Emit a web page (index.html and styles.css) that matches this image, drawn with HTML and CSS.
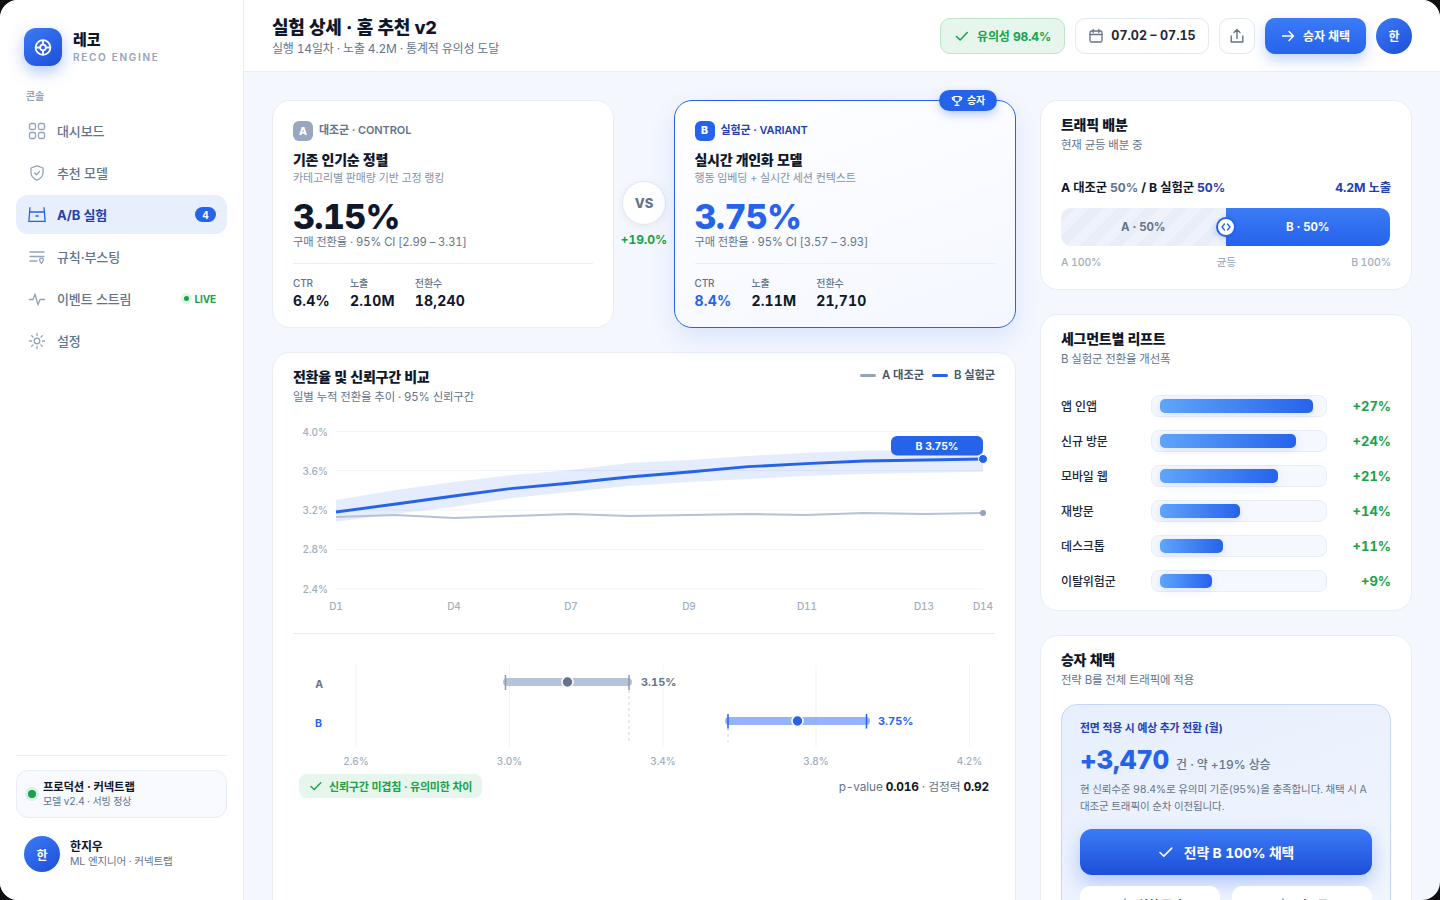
FILE: index.html
```html
<!DOCTYPE html>
<html lang="ko">
<head>
  <meta charset="UTF-8" />
  <title>레코 - 실험 상세</title>
  <link rel="stylesheet" href="styles.css">
</head>
<body>
  <div class="app">
    <aside class="sidebar">
      <div class="brand">
        <div class="brand-logo">
          <svg width="20" height="20" viewBox="0 0 20 20" fill="none" stroke="#fff" stroke-width="1.8">
            <circle cx="10" cy="10.500" r="7.400"/>
            <circle cx="10" cy="10.500" r="2.800"/>
            <path d="M10 3v4.700M10 13.300V18M2.600 10.500h4.600M12.800 10.500h4.600"/>
          </svg>
        </div>
        <div>
          <div class="brand-name">레코</div>
          <div class="brand-sub">RECO ENGINE</div>
        </div>
      </div>

      <div class="nav-title">콘솔</div>
      <nav class="nav">
        <a class="nav-item">
          <svg class="nav-icon" viewBox="0 0 18 18" fill="none" stroke="currentColor" stroke-width="1.3"><rect x="1.500" y="1.500" width="6" height="6" rx="1.500"/><rect x="10.500" y="1.500" width="6" height="6" rx="1.500"/><rect x="1.500" y="10.500" width="6" height="6" rx="1.500"/><rect x="10.500" y="10.500" width="6" height="6" rx="1.500"/></svg>
          대시보드
        </a>
        <a class="nav-item">
          <svg class="nav-icon" viewBox="0 0 18 18" fill="none" stroke="currentColor" stroke-width="1.3" stroke-linejoin="round" stroke-linecap="round"><path d="M9 1.800l6 2.200v4.600c0 3.600-2.500 6.200-6 7.600-3.500-1.400-6-4-6-7.600V4z"/><path d="M6.600 9l1.700 1.700 3.200-3.200"/></svg>
          추천 모델
        </a>
        <a class="nav-item active">
          <svg class="nav-icon" viewBox="0 0 18 18" fill="none" stroke="currentColor" stroke-width="1.300"><path d="M2 1.300L.9 15.300h16.200L16 1.300"/><path d="M1.600 6h14.800"/><path d="M7.300 10h3.400"/></svg>
          A/B 실험
          <span class="nav-badge">4</span>
        </a>
        <a class="nav-item">
          <svg class="nav-icon" viewBox="0 0 18 18" fill="none" stroke="currentColor" stroke-width="1.3" stroke-linecap="round"><path d="M2 4h14M2 8.500h14M2 13h7"/><path d="M13.500 10.200a1.900 1.900 0 0 1 1.900 1.900c0 1-1 1.900-1.900 3.200-.9-1.300-1.900-2.200-1.900-3.200a1.900 1.900 0 0 1 1.900-1.900z"/></svg>
          규칙·부스팅
        </a>
        <a class="nav-item">
          <svg class="nav-icon" viewBox="0 0 18 18" fill="none" stroke="currentColor" stroke-width="1.3" stroke-linecap="round" stroke-linejoin="round"><path d="M1.500 9.500h3.500L7 4l3 11 2-5.500h4.500"/></svg>
          이벤트 스트림
          <span class="nav-live"><i class="live-dot"></i>LIVE</span>
        </a>
        <a class="nav-item">
          <svg class="nav-icon" viewBox="0 0 18 18" fill="none" stroke="currentColor" stroke-width="1.3" stroke-linecap="round"><circle cx="9" cy="9" r="2.800"/><path d="M9 1.500v2M9 14.500v2M1.500 9h2M14.500 9h2M3.700 3.700l1.400 1.400M12.900 12.900l1.400 1.400M3.700 14.300l1.400-1.400M12.900 5.100l1.400-1.400"/></svg>
          설정
        </a>
      </nav>

      <div class="side-foot">
        <div class="env-card">
          <i class="env-dot"></i>
          <div>
            <div class="env-name">프로덕션 · 커넥트랩</div>
            <div class="env-sub">모델 v2.4 · 서빙 정상</div>
          </div>
        </div>
        <div class="user">
          <div class="avatar">한</div>
          <div>
            <div class="user-name">한지우</div>
            <div class="user-role">ML 엔지니어 · 커넥트랩</div>
          </div>
        </div>
      </div>
    </aside>

    <div class="page">
      <header class="topbar">
        <div class="top-text">
          <h1>실험 상세 · 홈 추천 v2</h1>
          <p>실행 14일차 · 노출 4.2M · 통계적 유의성 도달</p>
        </div>
        <div class="top-actions">
          <div class="pill pill-green">
            <svg width="16" height="16" viewBox="0 0 16 16" fill="none" stroke="currentColor" stroke-width="1.500" stroke-linecap="round" stroke-linejoin="round"><path d="M2.500 8.500l3.600 3.400 7.200-7.400"/></svg>
            유의성 98.4%
          </div>
          <div class="pill pill-date">
            <svg width="16" height="16" viewBox="0 0 16 16" fill="none" stroke="#64748b" stroke-width="1.3" stroke-linecap="round"><rect x="2" y="3" width="12" height="11" rx="1.600"/><path d="M2 6.500h12M5.200 1.500v3M10.800 1.500v3"/></svg>
            07.02 – 07.15
          </div>
          <div class="icon-btn">
            <svg width="16" height="16" viewBox="0 0 16 16" fill="none" stroke="#64748b" stroke-width="1.4" stroke-linecap="round" stroke-linejoin="round"><path d="M8 10.500V1.800M5 4.500l3-3 3 3"/><path d="M2.200 8v6h11.600V8"/></svg>
          </div>
          <div class="cta">
            <svg width="14" height="14" viewBox="0 0 14 14" fill="none" stroke="#fff" stroke-width="1.4" stroke-linecap="round" stroke-linejoin="round"><path d="M1.500 7h11M8 2.500L12.500 7 8 11.500"/></svg>
            승자 채택
          </div>
          <div class="avatar">한</div>
        </div>
      </header>

      <main class="content">
        <div class="col-left">
          <section class="compare">
            <article class="variant">
              <div class="variant-tag"><span class="letter letter-a">A</span><span class="tag-text">대조군 · CONTROL</span></div>
              <h2>기존 인기순 정렬</h2>
              <p class="variant-desc">카테고리별 판매량 기반 고정 랭킹</p>
              <div class="rate">3.15%</div>
              <p class="rate-sub">구매 전환율 · 95% CI [2.99 – 3.31]</p>
              <div class="stats">
                <div><span>CTR</span><b>6.4%</b></div>
                <div><span>노출</span><b>2.10M</b></div>
                <div><span>전환수</span><b>18,240</b></div>
              </div>
            </article>

            <div class="versus">
              <div class="vs-circle">VS</div>
              <div class="vs-lift">+19.0%</div>
            </div>

            <article class="variant variant-b">
              <div class="ribbon">
                <svg width="12" height="12" viewBox="0 0 12 12" fill="none" stroke="#fff" stroke-width="1.2" stroke-linecap="round"><path d="M3 1.500h6v2.500a3 3 0 0 1-6 0z"/><path d="M3 2.500H1.200c0 1.600.6 2.400 1.900 2.600M9 2.500h1.800c0 1.600-.6 2.400-1.900 2.600M6 7v2.600M4 10.300h4"/></svg>
                <span class="ribbon-text">승자</span>
              </div>
              <div class="variant-tag"><span class="letter letter-b">B</span><span class="tag-text">실험군 · VARIANT</span></div>
              <h2>실시간 개인화 모델</h2>
              <p class="variant-desc">행동 임베딩 + 실시간 세션 컨텍스트</p>
              <div class="rate">3.75%</div>
              <p class="rate-sub">구매 전환율 · 95% CI [3.57 – 3.93]</p>
              <div class="stats">
                <div><span>CTR</span><b class="blue">8.4%</b></div>
                <div><span>노출</span><b>2.11M</b></div>
                <div><span>전환수</span><b>21,710</b></div>
              </div>
            </article>
          </section>

          <section class="card chart-card">
            <div class="chart-head">
              <div class="card-head">
                <h3>전환율 및 신뢰구간 비교</h3>
                <p>일별 누적 전환율 추이 · 95% 신뢰구간</p>
              </div>
              <div class="legend">
                <span><i class="swatch swatch-a"></i>A 대조군</span>
                <span><i class="swatch swatch-b"></i>B 실험군</span>
              </div>
            </div>

            <svg class="line-chart" width="702" height="200" viewBox="293 420 702 200">
              <g stroke="#eff3fb" stroke-width="1.2">
                <path d="M336 431.500H983M336 470.500H983M336 510H983M336 549.500H983M336 589H983"/>
              </g>
              <g class="axis" text-anchor="end">
                <text x="328" y="436">4.0%</text>
                <text x="328" y="475">3.6%</text>
                <text x="328" y="514">3.2%</text>
                <text x="328" y="553">2.8%</text>
                <text x="328" y="593">2.4%</text>
              </g>
              <g class="axis" text-anchor="middle">
                <text x="336" y="610">D1</text>
                <text x="454" y="610">D4</text>
                <text x="571" y="610">D7</text>
                <text x="689" y="610">D9</text>
                <text x="807" y="610">D11</text>
                <text x="924" y="610">D13</text>
                <text x="983" y="610">D14</text>
              </g>
              <path fill="#2563eb" fill-opacity=".12" d="M336 500L396 490L454 482L513 475L571 470L629 463L689 460L748 456L806 452.700L864 450.700L925 450L983 450V471.700L925 472.700L864 474L806 476L748 479L689 482L629 486L571 491.700L513 498L454 506.700L396 513.700L336 521.700Z"/>
              <path fill="none" stroke="#b6c2d6" stroke-width="2" stroke-linejoin="round" d="M336 517L396 515L454 518L513 516L571 514L629 516L689 515L748 514L806 515L864 513L925 514L983 513"/>
              <path fill="none" stroke="#2563eb" stroke-width="2.800" stroke-linejoin="round" d="M336 512L396 504L454 496L513 488.300L571 483L629 477L689 472L748 466.700L806 463.700L864 461L925 460L983 459"/>
              <circle cx="983" cy="513" r="3" fill="#94a3b8"/>
              <circle cx="983" cy="459" r="4.500" fill="#2563eb" stroke="#fff" stroke-width="1"/>
              <rect x="891" y="436" width="92" height="19.500" rx="6" fill="#2563eb"/>
              <text class="chart-tag" x="937" y="449.500" text-anchor="middle">B 3.75%</text>
            </svg>

            <div class="forest">
              <svg width="702" height="120" viewBox="293 650 702 120">
                <path stroke="#eff3fb" stroke-width="1" d="M356 665V747M509.500 665V747M663 665V747M816 665V747M969.500 665V747"/>
                <path stroke="#cbd5e1" stroke-width="1" stroke-dasharray="3 3" d="M629 690V742M728 728V742"/>
                <text class="row-label row-a" x="319" y="688" text-anchor="middle">A</text>
                <text class="row-label row-b" x="318.500" y="727" text-anchor="middle">B</text>

                <path stroke="#b6c3d9" stroke-width="8" stroke-linecap="round" d="M507 682H628"/>
                <path stroke="#8a9ab3" stroke-width="1.500" d="M505.500 675V690M629 675V690"/>
                <circle cx="567.500" cy="682" r="5.500" fill="#64748b" stroke="#fff" stroke-width="1.500"/>
                <text class="ci-val ci-a" x="641" y="686">3.15%</text>

                <path stroke="#93b4fb" stroke-width="8" stroke-linecap="round" d="M729 721H866"/>
                <path stroke="#2563eb" stroke-width="1.500" d="M728 714V728.500M866.500 714V728.500"/>
                <circle cx="797.500" cy="721" r="5.500" fill="#2563eb" stroke="#fff" stroke-width="1.500"/>
                <text class="ci-val ci-b" x="878" y="725">3.75%</text>

                <g class="axis" text-anchor="middle">
                  <text x="356" y="765">2.6%</text>
                  <text x="509.500" y="765">3.0%</text>
                  <text x="663" y="765">3.4%</text>
                  <text x="816" y="765">3.8%</text>
                  <text x="969.500" y="765">4.2%</text>
                </g>
              </svg>
              <div class="forest-foot">
                <div class="sig-badge">
                  <svg width="14" height="14" viewBox="0 0 14 14" fill="none" stroke="currentColor" stroke-width="1.400" stroke-linecap="round" stroke-linejoin="round"><path d="M2 7.500l3.200 3 6.600-6.800"/></svg>
                  신뢰구간 미겹침 · 유의미한 차이
                </div>
                <div class="pvalue">p-value <b>0.016</b> · 검정력 <b>0.92</b></div>
              </div>
            </div>
          </section>
        </div>

        <div class="col-right">
          <section class="card">
            <div class="card-head">
              <h3>트래픽 배분</h3>
              <p>현재 균등 배분 중</p>
            </div>
            <div class="split-row">
              <span>A 대조군 <em class="grey">50%</em> / B 실험군 <em class="navy">50%</em></span>
              <span class="navy">4.2M 노출</span>
            </div>
            <div class="split-bar">
              <div class="split-a">A · 50%</div>
              <div class="split-b">B · 50%</div>
              <div class="split-handle">
                <svg width="10" height="10" viewBox="0 0 10 10" fill="none" stroke="#2563eb" stroke-width="1.300" stroke-linecap="round" stroke-linejoin="round"><path d="M3.500 2L1 5l2.500 3M6.500 2L9 5 6.500 8"/></svg>
              </div>
            </div>
            <div class="split-scale"><span>A 100%</span><span>균등</span><span>B 100%</span></div>
          </section>

          <section class="card">
            <div class="card-head">
              <h3>세그먼트별 리프트</h3>
              <p>B 실험군 전환율 개선폭</p>
            </div>
            <div class="segments">
              <div class="segment"><span class="seg-name">앱 인앱</span><div class="seg-track"><div class="seg-fill" style="width:153px"></div></div><span class="seg-val">+27%</span></div>
              <div class="segment"><span class="seg-name">신규 방문</span><div class="seg-track"><div class="seg-fill" style="width:136px"></div></div><span class="seg-val">+24%</span></div>
              <div class="segment"><span class="seg-name">모바일 웹</span><div class="seg-track"><div class="seg-fill" style="width:118px"></div></div><span class="seg-val">+21%</span></div>
              <div class="segment"><span class="seg-name">재방문</span><div class="seg-track"><div class="seg-fill" style="width:80px"></div></div><span class="seg-val">+14%</span></div>
              <div class="segment"><span class="seg-name">데스크톱</span><div class="seg-track"><div class="seg-fill" style="width:63px"></div></div><span class="seg-val">+11%</span></div>
              <div class="segment"><span class="seg-name">이탈위험군</span><div class="seg-track"><div class="seg-fill" style="width:52px"></div></div><span class="seg-val">+9%</span></div>
            </div>
          </section>

          <section class="card">
            <div class="card-head">
              <h3>승자 채택</h3>
              <p>전략 B를 전체 트래픽에 적용</p>
            </div>
            <div class="adopt">
              <div class="adopt-title">전면 적용 시 예상 추가 전환 (월)</div>
              <div class="adopt-num"><strong>+3,470</strong><span>건 · 약 +19% 상승</span></div>
              <p class="adopt-desc">현 신뢰수준 98.4%로 유의미 기준(95%)을 충족합니다. 채택 시 A 대조군 트래픽이 순차 이전됩니다.</p>
              <div class="adopt-btn">
                <svg width="16" height="16" viewBox="0 0 16 16" fill="none" stroke="#fff" stroke-width="1.500" stroke-linecap="round" stroke-linejoin="round"><path d="M2 8.500l3.800 3.600 8-8"/></svg>
                전략 B 100% 채택
              </div>
              <div class="adopt-sub">
                <div class="ghost-btn">
                  <svg width="14" height="14" viewBox="0 0 14 14" fill="none" stroke="#64748b" stroke-width="1.300"><path d="M7 1.500v5M3 4.500a5 5 0 1 0 8 0"/></svg>
                  실험 중단
                </div>
                <div class="ghost-btn">
                  <svg width="14" height="14" viewBox="0 0 14 14" fill="none" stroke="#64748b" stroke-width="1.300"><path d="M7 1.500v8M4 6.500l3 3 3-3M2 12.500h10"/></svg>
                  리포트
                </div>
              </div>
            </div>
          </section>
        </div>
      </main>
    </div>
  </div>
</body>
</html>
```

FILE: styles.css
```css
/* Reset */
*, *::before, *::after {
  box-sizing: border-box;
}

body {
  margin: 0;
  background: #0f0f12;
  font-family: Inter, "Noto Sans CJK KR", sans-serif;
  font-variant-numeric: tabular-nums;
  letter-spacing: -0.12px;
  color: #0f172a;
}

h1, h2, h3, p {
  margin: 0;
}

.app {
  width: 1440px;
  height: 900px;
  display: flex;
  overflow: hidden;
  border-radius: 18px;
  background: #f4f7fe;
}

/* Sidebar */
.sidebar {
  width: 244px;
  flex-shrink: 0;
  display: flex;
  flex-direction: column;
  background: #fff;
  border-right: 1px solid #e8edf7;
  padding: 28px 16px 28px;
}

.brand {
  display: flex;
  align-items: center;
  gap: 11px;
  padding-left: 8px;
}

.brand-logo {
  width: 38px;
  height: 38px;
  display: flex;
  align-items: center;
  justify-content: center;
  border-radius: 12px;
  background: linear-gradient(145deg, #3b7bf6, #1d4ed8);
  box-shadow: 0 6px 16px rgba(37, 99, 235, 0.35);
}

.brand-name {
  font-size: 15px;
  font-weight: 800;
  line-height: 20px;
}

.brand-sub {
  font-size: 10px;
  font-weight: 600;
  line-height: 14px;
  letter-spacing: 1.7px;
  color: #94a3b8;
}

.nav-title {
  margin-top: 22px;
  padding-left: 10px;
  font-size: 10px;
  font-weight: 600;
  line-height: 16px;
  color: #94a3b8;
}

.nav {
  margin-top: 7px;
  display: flex;
  flex-direction: column;
  gap: 3px;
}

.nav-item {
  height: 39px;
  display: flex;
  align-items: center;
  gap: 11px;
  padding: 0 11px 0 12px;
  border-radius: 12px;
  font-size: 13px;
  font-weight: 500;
  color: #64748b;
}

.nav-item.active {
  background: #e7eefc;
  color: #1e40af;
  font-weight: 700;
}

.nav-item.active .nav-icon {
  color: #2563eb;
}

.nav-icon {
  width: 18px;
  height: 18px;
  flex-shrink: 0;
  color: #94a3b8;
}

.nav-badge {
  margin-left: auto;
  min-width: 21px;
  height: 15px;
  display: flex;
  align-items: center;
  justify-content: center;
  border-radius: 8px;
  background: #2563eb;
  color: #fff;
  font-size: 10px;
  font-weight: 700;
}

.nav-live {
  margin-left: auto;
  display: flex;
  align-items: center;
  gap: 5px;
  font-size: 10px;
  font-weight: 700;
  color: #16a34a;
}

.live-dot {
  width: 5px;
  height: 5px;
  border-radius: 50%;
  background: #16a34a;
  box-shadow: 0 0 0 3px rgba(22, 163, 74, 0.13);
}

.side-foot {
  margin-top: auto;
  border-top: 1px solid #e8edf7;
  padding-top: 14px;
}

.env-card {
  height: 48px;
  display: flex;
  align-items: center;
  gap: 7px;
  padding: 0 10px 0 11px;
  border: 1px solid #e8edf7;
  border-radius: 12px;
  background: #f8faff;
}

.env-dot {
  width: 8px;
  height: 8px;
  flex-shrink: 0;
  border-radius: 50%;
  background: #16a34a;
  box-shadow: 0 0 0 3px rgba(22, 163, 74, 0.13);
}

.env-name {
  font-size: 11.3px;
  font-weight: 700;
  line-height: 15px;
}

.env-sub {
  font-size: 10px;
  line-height: 13px;
  color: #64748b;
}

.user {
  margin-top: 18px;
  display: flex;
  align-items: center;
  gap: 10px;
  padding-left: 8px;
}

.avatar {
  width: 36px;
  height: 36px;
  flex-shrink: 0;
  display: flex;
  align-items: center;
  justify-content: center;
  border-radius: 50%;
  background: linear-gradient(145deg, #3b7bf6, #1d4ed8);
  color: #fff;
  font-size: 12px;
  font-weight: 700;
}

.user-name {
  font-size: 12px;
  font-weight: 600;
  line-height: 16px;
}

.user-role {
  font-size: 10.5px;
  line-height: 14px;
  color: #64748b;
}

/* Topbar */
.page {
  flex: 1;
  min-width: 0;
  display: flex;
  flex-direction: column;
}

.topbar {
  height: 72px;
  flex-shrink: 0;
  display: flex;
  align-items: center;
  justify-content: space-between;
  padding: 0 28px;
  background: #fff;
  border-bottom: 1px solid #e8edf7;
}

.top-text h1 {
  font-size: 18px;
  font-weight: 800;
  line-height: 25px;
  letter-spacing: -0.3px;
}

.top-text p {
  font-size: 12px;
  line-height: 17px;
  letter-spacing: -0.18px;
  color: #64748b;
}

.top-actions {
  display: flex;
  align-items: center;
  gap: 10px;
}

.pill {
  height: 36px;
  display: flex;
  align-items: center;
  gap: 6px;
  border-radius: 10px;
  font-size: 12px;
  font-weight: 700;
}

.pill-green {
  width: 125px;
  justify-content: center;
  gap: 7px;
  background: #e7f6ec;
  border: 1px solid #bbe6c9;
  color: #16a34a;
}

.pill-date {
  width: 134px;
  justify-content: center;
  gap: 7px;
  background: #fff;
  border: 1px solid #e2e8f4;
  font-size: 12.5px;
  letter-spacing: 0;
  color: #1e293b;
}

.icon-btn {
  width: 36px;
  height: 36px;
  display: flex;
  align-items: center;
  justify-content: center;
  border: 1px solid #e2e8f4;
  border-radius: 10px;
  background: #fff;
}

.cta {
  width: 101px;
  height: 36px;
  display: flex;
  align-items: center;
  justify-content: center;
  gap: 8px;
  border-radius: 10px;
  background: linear-gradient(180deg, #3b7bf6, #2563eb);
  box-shadow: 0 6px 14px rgba(37, 99, 235, 0.28);
  color: #fff;
  font-size: 12px;
  font-weight: 700;
}

/* Main grid */
.content {
  flex: 1;
  min-height: 0;
  display: flex;
  align-items: flex-start;
  gap: 24px;
  padding: 28px 28px 0;
}

.col-left {
  width: 744px;
  display: flex;
  flex-direction: column;
  gap: 24px;
}

.col-right {
  width: 372px;
  flex-shrink: 0;
  display: flex;
  flex-direction: column;
  gap: 24px;
}

.card {
  background: #fff;
  border: 1px solid #e8edf7;
  border-radius: 18px;
  padding: 15px 20px 18px 20px;
}

.card-head h3 {
  font-size: 14px;
  font-weight: 800;
  line-height: 18px;
  letter-spacing: -0.28px;
}

.card-head p {
  margin-top: 3px;
  font-size: 11.4px;
  line-height: 16px;
  color: #64748b;
}

/* Variant cards */
.compare {
  display: flex;
}

.variant {
  position: relative;
  width: 342px;
  flex-shrink: 0;
  padding: 20px 20px 17px;
  background: #fff;
  border: 1px solid #e8edf7;
  border-radius: 18px;
}

.variant-b {
  padding: 19.5px 19.5px 16.5px;
  border: 1.5px solid #2563eb;
  background: linear-gradient(160deg, #fff, #f4f7ff);
  box-shadow: 0 10px 26px rgba(37, 99, 235, 0.12);
}

.ribbon {
  position: absolute;
  top: -11px;
  right: 18px;
  width: 58px;
  height: 21px;
  display: flex;
  align-items: center;
  justify-content: center;
  gap: 4px;
  border-radius: 11px;
  background: #2563eb;
  box-shadow: 0 4px 10px rgba(37, 99, 235, 0.3);
  color: #fff;
  font-size: 10px;
  font-weight: 700;
}

.ribbon-text {
  margin-top: -2px;
}

.variant-tag {
  display: flex;
  align-items: center;
  gap: 6px;
  font-size: 11px;
  font-weight: 600;
  color: #64748b;
}

.tag-text {
  margin-top: -4px;
}

.variant-b .variant-tag {
  color: #1e40af;
}

.letter {
  width: 20px;
  height: 20px;
  display: flex;
  align-items: center;
  justify-content: center;
  border-radius: 6px;
  color: #fff;
  font-size: 10.5px;
  font-weight: 800;
}

.letter-a {
  background: #9aa8bf;
}

.letter-b {
  background: #2563eb;
}

.variant h2 {
  margin-top: 9px;
  font-size: 14px;
  font-weight: 800;
  line-height: 20px;
  letter-spacing: -0.3px;
}

.variant-desc {
  font-size: 11px;
  line-height: 16px;
  color: #8492a6;
}

.rate {
  margin-top: 13px;
  font-size: 34px;
  font-weight: 800;
  line-height: 36px;
  letter-spacing: -0.6px;
  color: #0f172a;
}

.variant-b .rate {
  color: #2563eb;
}

.rate-sub {
  margin-top: -1px;
  font-size: 11.25px;
  line-height: 16px;
  color: #64748b;
}

.stats {
  margin-top: 13px;
  padding-top: 12px;
  display: flex;
  gap: 20px;
  border-top: 1px solid #e8edf7;
}

.stats span {
  display: block;
  font-size: 10px;
  font-weight: 500;
  line-height: 14px;
  color: #64748b;
}

.stats b {
  display: block;
  margin-top: 2px;
  font-size: 14px;
  font-weight: 700;
  line-height: 18px;
  letter-spacing: 0.2px;
}

.stats b.blue {
  color: #2563eb;
}

.versus {
  flex: 1;
  display: flex;
  flex-direction: column;
  align-items: center;
  justify-content: center;
  gap: 8px;
}

.vs-circle {
  width: 44px;
  height: 44px;
  display: flex;
  align-items: center;
  justify-content: center;
  border: 1px solid #e2e8f4;
  border-radius: 50%;
  background: #fff;
  box-shadow: 0 2px 8px rgba(15, 23, 42, 0.06);
  font-size: 13px;
  font-weight: 800;
  color: #64748b;
}

.vs-lift {
  font-size: 12px;
  font-weight: 700;
  line-height: 14px;
  letter-spacing: 0;
  color: #16a34a;
}

/* Chart card */
.chart-card {
  height: 620px;
  flex-shrink: 0;
}

.chart-head {
  display: flex;
  justify-content: space-between;
  align-items: flex-start;
}

.legend {
  margin-top: -2px;
  display: flex;
  gap: 8px;
  font-size: 11.3px;
  font-weight: 600;
  line-height: 18px;
  color: #475569;
}

.legend span {
  display: flex;
  align-items: center;
  gap: 6px;
}

.swatch {
  width: 16px;
  height: 3px;
  border-radius: 2px;
}

.swatch-a {
  background: #94a3b8;
}

.swatch-b {
  background: #2563eb;
}

.line-chart {
  display: block;
  margin-top: 15px;
}

.axis text {
  font-size: 10px;
  font-weight: 500;
  letter-spacing: 0;
  fill: #a0aec0;
}

.chart-tag {
  font-size: 10.5px;
  font-weight: 700;
  fill: #fff;
}

.forest {
  margin-top: 13px;
  border-top: 1px solid #e8edf7;
  padding-top: 16px;
}

.forest svg {
  display: block;
}

.row-label {
  font-size: 10.5px;
  font-weight: 700;
}

.row-a {
  fill: #64748b;
}

.row-b {
  fill: #2563eb;
}

.ci-val {
  font-size: 11px;
  font-weight: 700;
  letter-spacing: 0;
}

.ci-a {
  fill: #64748b;
}

.ci-b {
  fill: #2563eb;
}

.forest-foot {
  margin-top: 4px;
  padding: 0 6px;
  display: flex;
  align-items: center;
  justify-content: space-between;
}

.sig-badge {
  height: 24px;
  display: flex;
  align-items: center;
  gap: 6px;
  padding: 0 10px;
  border-radius: 8px;
  background: #e7f6ec;
  color: #16a34a;
  font-size: 11px;
  font-weight: 600;
  letter-spacing: -0.2px;
}

.pvalue {
  margin-top: -2px;
  font-size: 11.8px;
  color: #64748b;
}

.pvalue b {
  font-weight: 700;
  color: #0f172a;
}

/* Traffic split */
.split-row {
  margin-top: 27px;
  display: flex;
  justify-content: space-between;
  font-size: 12.3px;
  font-weight: 700;
  line-height: 16px;
}

.split-row em {
  font-style: normal;
}

.grey {
  color: #64748b;
}

.navy {
  color: #1e40af;
}

.split-bar {
  position: relative;
  height: 38px;
  margin: 12px 1px 0 0;
  display: flex;
  font-size: 11.5px;
  font-weight: 700;
}

.split-a, .split-b {
  width: 50%;
  display: flex;
  align-items: center;
  justify-content: center;
}

.split-a {
  border-radius: 10px 0 0 10px;
  background: repeating-linear-gradient(135deg, #e8edf7 0 10px, #eef2fb 10px 20px);
  color: #64748b;
}

.split-b {
  border-radius: 0 10px 10px 0;
  background: linear-gradient(180deg, #3b7bf6, #2563eb);
  color: #fff;
}

.split-handle {
  position: absolute;
  top: 9px;
  left: 50%;
  width: 20px;
  height: 20px;
  margin-left: -10px;
  display: flex;
  align-items: center;
  justify-content: center;
  border: 2.5px solid #2563eb;
  border-radius: 50%;
  background: #fff;
  box-shadow: 0 2px 6px rgba(37, 99, 235, 0.3);
}

.split-scale {
  margin: 10px 0 1px;
  display: flex;
  justify-content: space-between;
  font-size: 10.5px;
  font-weight: 500;
  line-height: 14px;
  color: #a0aec0;
}

/* Segments */
.segments {
  margin-top: 28px;
  display: flex;
  flex-direction: column;
  gap: 13px;
}

.segment {
  height: 22px;
  display: flex;
  align-items: center;
}

.seg-name {
  width: 90px;
  flex-shrink: 0;
  margin-top: -2px;
  font-size: 12px;
  font-weight: 500;
  color: #1e293b;
}

.seg-track {
  position: relative;
  width: 176px;
  height: 22px;
  padding: 3px 0 0 8px;
  border: 1px solid #e8edf7;
  border-radius: 8px;
  background: #f6f8ff;
}

.seg-fill {
  height: 14px;
  border-radius: 5px;
  background: linear-gradient(90deg, #60a5fa, #2563eb);
  box-shadow: 0 2px 8px rgba(37, 99, 235, 0.15);
}

.seg-val {
  flex: 1;
  text-align: right;
  font-size: 13px;
  font-weight: 700;
  letter-spacing: 0;
  color: #16a34a;
}

/* Adopt panel */
.adopt {
  margin-top: 16px;
  padding: 16px 18px 18px;
  border: 1px solid #c7d7f9;
  border-radius: 16px;
  background: linear-gradient(160deg, #e7effd, #f2f6ff);
}

.adopt-title {
  font-size: 10.8px;
  font-weight: 700;
  line-height: 16px;
  color: #1e40af;
}

.adopt-num {
  margin-top: 6px;
  display: flex;
  align-items: baseline;
  gap: 7px;
}

.adopt-num strong {
  font-size: 26px;
  font-weight: 800;
  line-height: 34px;
  letter-spacing: -0.3px;
  color: #2563eb;
}

.adopt-num span {
  font-size: 12px;
  font-weight: 500;
  color: #64748b;
}

.adopt-desc {
  margin-top: 4px;
  font-size: 10.5px;
  line-height: 17px;
  color: #64748b;
}

.adopt-btn {
  height: 46px;
  margin-top: 14px;
  display: flex;
  align-items: center;
  justify-content: center;
  gap: 10px;
  border-radius: 12px;
  background: linear-gradient(180deg, #3b7bf6, #1d4ed8);
  box-shadow: 0 8px 20px rgba(37, 99, 235, 0.3);
  color: #fff;
  font-size: 13.8px;
  font-weight: 700;
}

.adopt-sub {
  margin-top: 11px;
  display: flex;
  gap: 12px;
}

.ghost-btn {
  flex: 1;
  height: 36px;
  display: flex;
  align-items: center;
  justify-content: center;
  gap: 6px;
  border-radius: 10px;
  background: #fff;
  font-size: 11.5px;
  font-weight: 600;
  color: #475569;
}
```
